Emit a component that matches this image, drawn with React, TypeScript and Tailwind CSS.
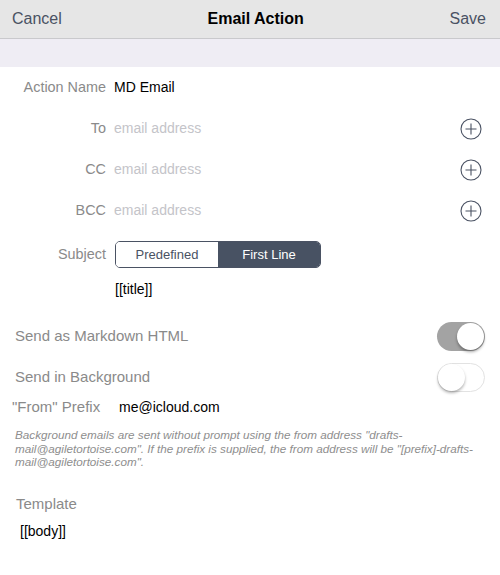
import React from "react";

function PlusIcon() {
  return (
    <svg width="22" height="22" viewBox="0 0 22 22" fill="none">
      <circle cx="11" cy="11" r="10" stroke="#4a5263" strokeWidth="1.1" />
      <path d="M11 5.5V16.5M5.5 11H16.5" stroke="#4a5263" strokeWidth="1.1" />
    </svg>
  );
}

function Toggle({ on }: { on: boolean }) {
  return on ? (
    <div className="relative h-[29px] w-[48px] rounded-full bg-[#a3a3a3]">
      <div className="absolute right-[1px] top-[1px] h-[27px] w-[27px] rounded-full bg-white shadow-[0_2px_3px_rgba(0,0,0,0.35)]" />
    </div>
  ) : (
    <div className="relative h-[29px] w-[48px] rounded-full border border-[#e2e2e2] bg-white">
      <div className="absolute left-0 top-0 h-[27px] w-[27px] rounded-full bg-white shadow-[0_2px_3px_rgba(0,0,0,0.3)]" />
    </div>
  );
}

function FieldRow({ label, value, placeholder, plus }: { label: string; value?: string; placeholder?: string; plus?: boolean }) {
  return (
    <div className="flex h-[41px] items-center">
      <div className="w-[106px] text-right text-[14.4px] text-[#8a8a8a]">{label}</div>
      <div className="ml-[8px] flex-1 text-[14px]">
        {value ? <span className="text-black">{value}</span> : <span className="text-[#c4c4c9]">{placeholder}</span>}
      </div>
      {plus && (
        <div className="mr-[18px]">
          <PlusIcon />
        </div>
      )}
    </div>
  );
}

export default function App() {
  return (
    <div className="h-[575px] w-[500px] overflow-hidden bg-white" style={{ fontFamily: '"Liberation Sans", Arial, sans-serif' }}>
      <div className="flex h-[39px] items-center justify-between border-b border-[#c9c9cc] bg-[#e6e6e6] px-[12px]">
        <span className="text-[16px] text-[#4a5263]">Cancel</span>
        <span className="text-[16px] font-bold text-black">Email Action</span>
        <span className="mr-[2px] text-[16px] text-[#4a5263]">Save</span>
      </div>
      <div className="h-[28px] bg-[#efedf4]" />
      <FieldRow label="Action Name" value="MD Email" />
      <FieldRow label="To" placeholder="email address" plus />
      <FieldRow label="CC" placeholder="email address" plus />
      <FieldRow label="BCC" placeholder="email address" plus />
      <div className="flex h-[37px] items-end">
        <div className="flex h-[27px] w-[106px] items-center justify-end text-[14.4px] text-[#8a8a8a]">Subject</div>
        <div className="ml-[9px] flex h-[27px] w-[206px] overflow-hidden rounded-[5px] border border-[#4a5263] text-[13px]">
          <div className="flex flex-1 items-center justify-center bg-white text-[#4a5263]">Predefined</div>
          <div className="flex flex-1 items-center justify-center bg-[#485263] text-white">First Line</div>
        </div>
      </div>
      <div className="flex h-[42px] items-center pl-[115px] text-[14px] text-black">[[title]]</div>
      <div className="mt-[5px] flex h-[42px] items-center justify-between pl-[15px] pr-[15px]">
        <span className="text-[15px] text-[#8a8a8a]">Send as Markdown HTML</span>
        <Toggle on />
      </div>
      <div className="flex h-[41px] items-center justify-between pl-[15px] pr-[15px]">
        <span className="text-[15px] text-[#8a8a8a]">Send in Background</span>
        <Toggle on={false} />
      </div>
      <div className="flex h-[18px] items-center pl-[12px]">
        <span className="w-[107px] text-[15px] text-[#8a8a8a]">"From" Prefix</span>
        <span className="text-[14px] text-black">me@icloud.com</span>
      </div>
      <div className="mt-[12px] whitespace-nowrap pl-[15px] text-[11.7px] italic leading-[13.5px] text-[#8e8e8e]">
        <div>Background emails are sent without prompt using the from address "drafts-</div>
        <div>mail@agiletortoise.com". If the prefix is supplied, the from address will be "[prefix]-drafts-</div>
        <div>mail@agiletortoise.com".</div>
      </div>
      <div className="mt-[27px] flex h-[18px] items-center pl-[16px] text-[15px] text-[#8a8a8a]">Template</div>
      <div className="mt-[9px] flex h-[18px] items-center pl-[20px] text-[14px] text-black">[[body]]</div>
    </div>
  );
}
